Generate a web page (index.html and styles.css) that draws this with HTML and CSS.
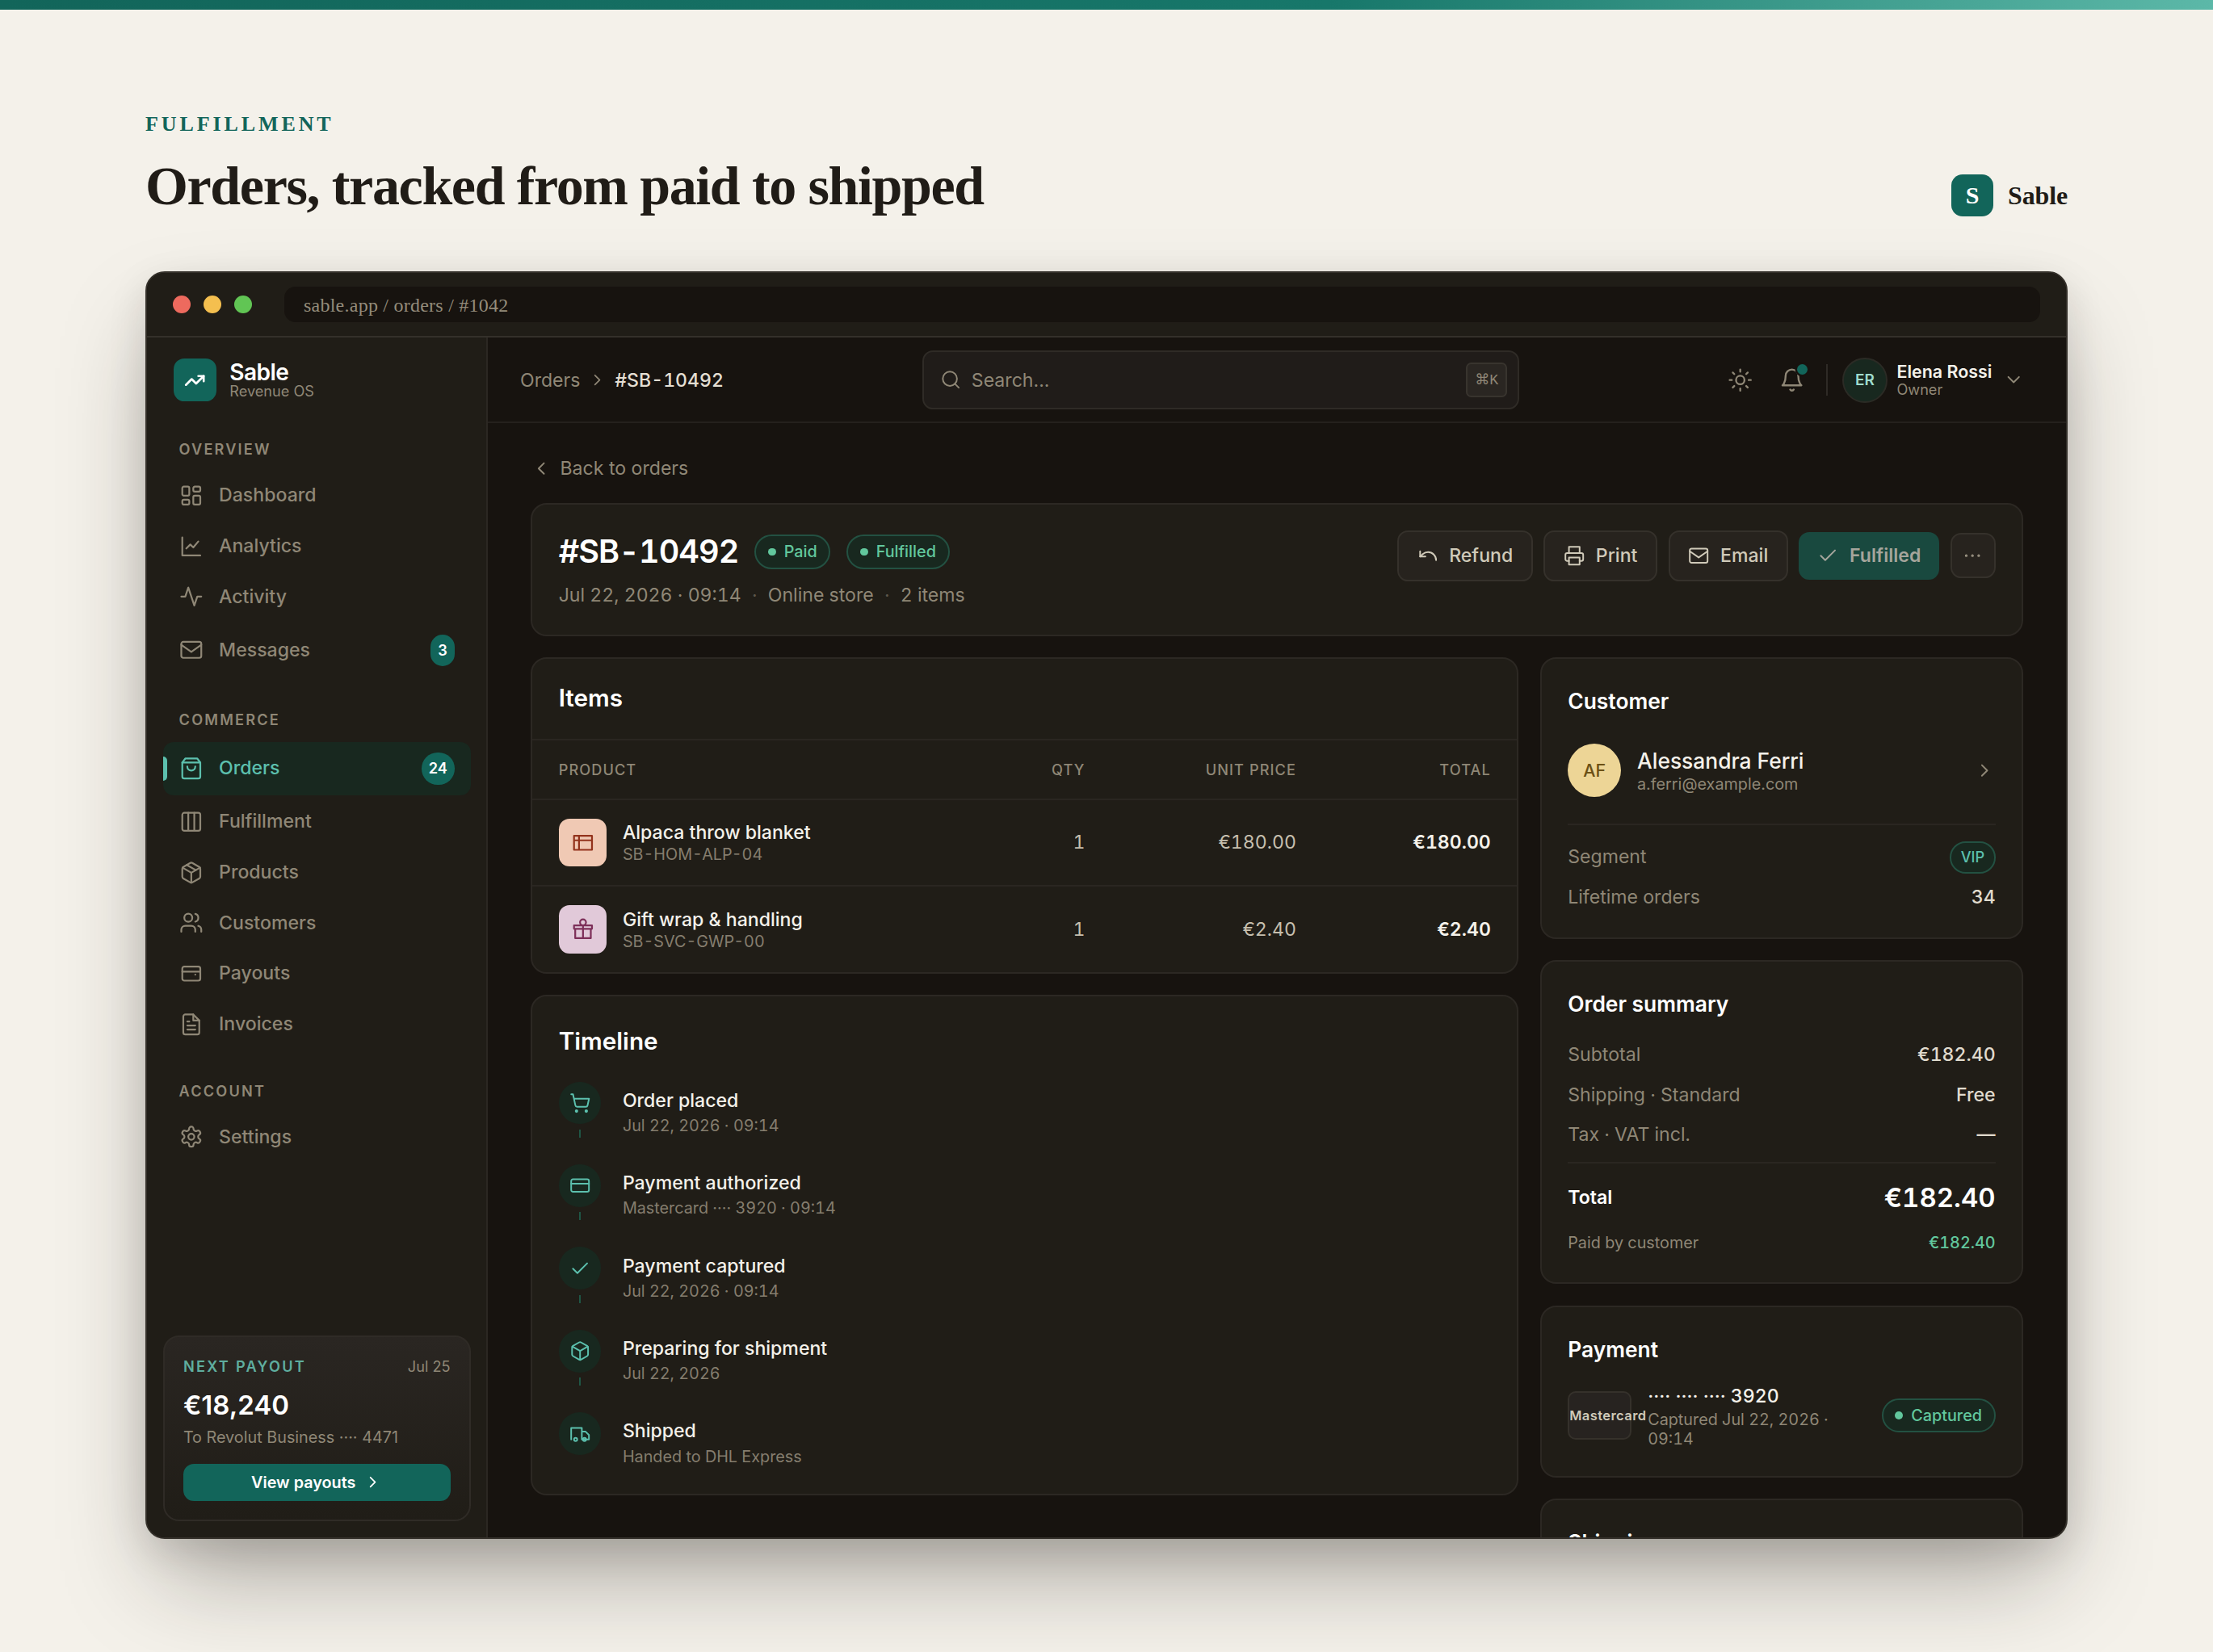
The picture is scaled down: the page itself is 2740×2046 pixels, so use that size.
FILE: index.html
```html
<!DOCTYPE html>
<html lang="en">
<head>
    <meta charset="UTF-8">
    <meta name="viewport" content="width=device-width, initial-scale=1.0">
    <title>Sable - Orders</title>
    <link rel="stylesheet" href="styles.css">
</head>
<body>
    <!-- icon sprite, 24x24 grid -->
    <svg class="sprite" xmlns="http://www.w3.org/2000/svg">
        <symbol id="i-trend" viewBox="0 0 24 24"><path d="M22 7l-8.5 8.5-5-5L2 17"/><path d="M16 7h6v6"/></symbol>
        <symbol id="i-dashboard" viewBox="0 0 24 24"><rect x="3" y="3" width="7" height="9" rx="1.5"/><rect x="14" y="3" width="7" height="5" rx="1.5"/><rect x="14" y="12" width="7" height="9" rx="1.5"/><rect x="3" y="16" width="7" height="5" rx="1.5"/></symbol>
        <symbol id="i-chart" viewBox="0 0 24 24"><path d="M3 3v18h18"/><path d="M7 14l4-4 3 3 5-6"/></symbol>
        <symbol id="i-activity" viewBox="0 0 24 24"><path d="M22 12h-4l-3 9L9 3l-3 9H2"/></symbol>
        <symbol id="i-mail" viewBox="0 0 24 24"><rect x="2" y="4" width="20" height="16" rx="2"/><path d="M22 7l-10 7L2 7"/></symbol>
        <symbol id="i-bag" viewBox="0 0 24 24"><path d="M6 2L3 6v14a2 2 0 0 0 2 2h14a2 2 0 0 0 2-2V6l-3-4z"/><path d="M3 6h18"/><path d="M16 10a4 4 0 0 1-8 0"/></symbol>
        <symbol id="i-columns" viewBox="0 0 24 24"><rect x="3" y="3" width="18" height="18" rx="2"/><path d="M9 3v18M15 3v18"/></symbol>
        <symbol id="i-package" viewBox="0 0 24 24"><path d="M16.5 9.4L7.5 4.2"/><path d="M21 16V8a2 2 0 0 0-1-1.73l-7-4a2 2 0 0 0-2 0l-7 4A2 2 0 0 0 3 8v8a2 2 0 0 0 1 1.73l7 4a2 2 0 0 0 2 0l7-4A2 2 0 0 0 21 16z"/><path d="M3.3 7L12 12l8.7-5M12 22V12"/></symbol>
        <symbol id="i-box" viewBox="0 0 24 24"><path d="M21 16V8a2 2 0 0 0-1-1.73l-7-4a2 2 0 0 0-2 0l-7 4A2 2 0 0 0 3 8v8a2 2 0 0 0 1 1.73l7 4a2 2 0 0 0 2 0l7-4A2 2 0 0 0 21 16z"/><path d="M3.3 7L12 12l8.7-5M12 22V12"/></symbol>
        <symbol id="i-users" viewBox="0 0 24 24"><path d="M16 21v-2a4 4 0 0 0-4-4H6a4 4 0 0 0-4 4v2"/><circle cx="9" cy="7" r="4"/><path d="M22 21v-2a4 4 0 0 0-3-3.87M16 3.13a4 4 0 0 1 0 7.75"/></symbol>
        <symbol id="i-wallet" viewBox="0 0 24 24"><rect x="3" y="5" width="18" height="14" rx="2"/><path d="M3 10h18M16 13h.01"/></symbol>
        <symbol id="i-file" viewBox="0 0 24 24"><path d="M14 2H6a2 2 0 0 0-2 2v16a2 2 0 0 0 2 2h12a2 2 0 0 0 2-2V8z"/><path d="M14 2v6h6M16 13H8M16 17H8M10 9H8"/></symbol>
        <symbol id="i-gear" viewBox="0 0 24 24"><path d="M12.22 2h-.44a2 2 0 0 0-2 2v.18a2 2 0 0 1-1 1.73l-.43.25a2 2 0 0 1-2 0l-.15-.08a2 2 0 0 0-2.73.73l-.22.38a2 2 0 0 0 .73 2.73l.15.1a2 2 0 0 1 1 1.72v.51a2 2 0 0 1-1 1.74l-.15.09a2 2 0 0 0-.73 2.73l.22.38a2 2 0 0 0 2.73.73l.15-.08a2 2 0 0 1 2 0l.43.25a2 2 0 0 1 1 1.73V20a2 2 0 0 0 2 2h.44a2 2 0 0 0 2-2v-.18a2 2 0 0 1 1-1.73l.43-.25a2 2 0 0 1 2 0l.15.08a2 2 0 0 0 2.73-.73l.22-.39a2 2 0 0 0-.73-2.73l-.15-.08a2 2 0 0 1-1-1.74v-.5a2 2 0 0 1 1-1.74l.15-.09a2 2 0 0 0 .73-2.73l-.22-.38a2 2 0 0 0-2.73-.73l-.15.08a2 2 0 0 1-2 0l-.43-.25a2 2 0 0 1-1-1.73V4a2 2 0 0 0-2-2z"/><circle cx="12" cy="12" r="3"/></symbol>
        <symbol id="i-right" viewBox="0 0 24 24"><path d="M9 18l6-6-6-6"/></symbol>
        <symbol id="i-left" viewBox="0 0 24 24"><path d="M15 18l-6-6 6-6"/></symbol>
        <symbol id="i-down" viewBox="0 0 24 24"><path d="M6 9l6 6 6-6"/></symbol>
        <symbol id="i-search" viewBox="0 0 24 24"><circle cx="11" cy="11" r="8"/><path d="M21 21l-4.3-4.3"/></symbol>
        <symbol id="i-sun" viewBox="0 0 24 24"><circle cx="12" cy="12" r="4"/><path d="M12 2v2M12 20v2M4.93 4.93l1.41 1.41M17.66 17.66l1.41 1.41M2 12h2M20 12h2M6.34 17.66l-1.41 1.41M19.07 4.93l-1.41 1.41"/></symbol>
        <symbol id="i-bell" viewBox="0 0 24 24"><path d="M6 8a6 6 0 0 1 12 0c0 7 3 9 3 9H3s3-2 3-9"/><path d="M10.3 21a1.94 1.94 0 0 0 3.4 0"/></symbol>
        <symbol id="i-undo" viewBox="0 0 24 24"><path d="M3 7v6h6"/><path d="M21 17a9 9 0 0 0-9-9 9 9 0 0 0-6 2.3L3 13"/></symbol>
        <symbol id="i-print" viewBox="0 0 24 24"><path d="M6 9V2h12v7"/><path d="M6 18H4a2 2 0 0 1-2-2v-5a2 2 0 0 1 2-2h16a2 2 0 0 1 2 2v5a2 2 0 0 1-2 2h-2"/><rect x="6" y="14" width="12" height="8"/></symbol>
        <symbol id="i-check" viewBox="0 0 24 24"><path d="M20 6L9 17l-5-5"/></symbol>
        <symbol id="i-more" viewBox="0 0 24 24"><circle cx="5" cy="12" r=".6"/><circle cx="12" cy="12" r=".6"/><circle cx="19" cy="12" r=".6"/></symbol>
        <symbol id="i-blanket" viewBox="0 0 24 24"><path d="M3 5h18v14H3zM3 9.5h18M8 5v14"/></symbol>
        <symbol id="i-gift" viewBox="0 0 24 24"><path d="M3 8.2h18v3.4H3zM4.2 11.6V21h15.6v-9.4M12 8.2V21"/><circle cx="12" cy="5.1" r="3"/></symbol>
        <symbol id="i-cart" viewBox="0 0 24 24"><circle cx="8" cy="21" r="1"/><circle cx="19" cy="21" r="1"/><path d="M2.05 2.05h2l2.66 12.42a2 2 0 0 0 2 1.58h9.78a2 2 0 0 0 1.95-1.57l1.65-7.43H5.12"/></symbol>
        <symbol id="i-card" viewBox="0 0 24 24"><rect x="2" y="5" width="20" height="14" rx="2"/><path d="M2 10h20"/></symbol>
        <symbol id="i-truck" viewBox="0 0 24 24"><path d="M2 18V5h12v13M14 9h4l4 4v5h-8"/><circle cx="7" cy="18" r="1.8"/><circle cx="17" cy="18" r="1.8"/></symbol>
    </svg>

    <div class="accent-bar"></div>

    <div class="stage">
        <header class="hero">
            <div>
                <div class="eyebrow">FULFILLMENT</div>
                <h1 class="headline">Orders, tracked from paid to shipped</h1>
            </div>
            <div class="wordmark"><span class="wordmark-box">S</span>Sable</div>
        </header>

        <div class="window">
            <div class="titlebar">
                <span class="light red"></span>
                <span class="light yellow"></span>
                <span class="light green"></span>
                <div class="address">sable.app / orders / #1042</div>
            </div>

            <div class="app">
                <aside class="sidebar">
                    <div class="brand">
                        <span class="brand-logo"><svg class="icon bold s16"><use href="#i-trend"/></svg></span>
                        <div>
                            <div class="brand-name">Sable</div>
                            <div class="brand-sub">Revenue OS</div>
                        </div>
                    </div>

                    <nav class="nav">
                        <div class="nav-group">
                            <div class="nav-label">OVERVIEW</div>
                            <a class="nav-item"><svg class="icon"><use href="#i-dashboard"/></svg>Dashboard</a>
                            <a class="nav-item"><svg class="icon"><use href="#i-chart"/></svg>Analytics</a>
                            <a class="nav-item"><svg class="icon"><use href="#i-activity"/></svg>Activity</a>
                            <a class="nav-item"><svg class="icon"><use href="#i-mail"/></svg>Messages<span class="count">3</span></a>
                        </div>
                        <div class="nav-group">
                            <div class="nav-label">COMMERCE</div>
                            <a class="nav-item active"><svg class="icon"><use href="#i-bag"/></svg>Orders<span class="count">24</span></a>
                            <a class="nav-item"><svg class="icon"><use href="#i-columns"/></svg>Fulfillment</a>
                            <a class="nav-item"><svg class="icon"><use href="#i-package"/></svg>Products</a>
                            <a class="nav-item"><svg class="icon"><use href="#i-users"/></svg>Customers</a>
                            <a class="nav-item"><svg class="icon"><use href="#i-wallet"/></svg>Payouts</a>
                            <a class="nav-item"><svg class="icon"><use href="#i-file"/></svg>Invoices</a>
                        </div>
                        <div class="nav-group">
                            <div class="nav-label">ACCOUNT</div>
                            <a class="nav-item"><svg class="icon"><use href="#i-gear"/></svg>Settings</a>
                        </div>
                    </nav>

                    <div class="payout">
                        <div class="payout-top"><span class="payout-label">NEXT PAYOUT</span><span class="payout-date">Jul 25</span></div>
                        <div class="payout-amount">€18,240</div>
                        <div class="payout-to">To Revolut Business ···· 4471</div>
                        <a class="payout-btn">View payouts<svg class="icon s14"><use href="#i-right"/></svg></a>
                    </div>
                </aside>

                <div class="main">
                    <div class="topbar">
                        <div class="crumbs"><span>Orders</span><svg class="icon s14"><use href="#i-right"/></svg><strong>#SB-10492</strong></div>
                        <div class="search"><svg class="icon s16"><use href="#i-search"/></svg><span>Search...</span><kbd>⌘K</kbd></div>
                        <div class="tools">
                            <svg class="icon s19"><use href="#i-sun"/></svg>
                            <span class="bell"><svg class="icon s19"><use href="#i-bell"/></svg><i></i></span>
                            <span class="divider"></span>
                            <span class="avatar">ER</span>
                            <div class="who">
                                <div class="who-name">Elena Rossi</div>
                                <div class="who-role">Owner</div>
                            </div>
                            <svg class="icon s16"><use href="#i-down"/></svg>
                        </div>
                    </div>

                    <div class="content">
                        <a class="back"><svg class="icon s16"><use href="#i-left"/></svg>Back to orders</a>

                        <section class="card order-head">
                            <div>
                                <div class="order-title">
                                    <h2>#SB-10492</h2>
                                    <span class="badge"><i></i>Paid</span>
                                    <span class="badge"><i></i>Fulfilled</span>
                                </div>
                                <div class="order-meta"><span>Jul 22, 2026 · 09:14</span><em>·</em><span>Online store</span><em>·</em><span>2 items</span></div>
                            </div>
                            <div class="actions">
                                <a class="btn"><svg class="icon s16"><use href="#i-undo"/></svg>Refund</a>
                                <a class="btn"><svg class="icon s16"><use href="#i-print"/></svg>Print</a>
                                <a class="btn"><svg class="icon s16"><use href="#i-mail"/></svg>Email</a>
                                <a class="btn primary"><svg class="icon s16"><use href="#i-check"/></svg>Fulfilled</a>
                                <a class="btn more"><svg class="icon s16"><use href="#i-more"/></svg></a>
                            </div>
                        </section>

                        <div class="columns">
                            <div class="stack">
                                <section class="card">
                                    <h3 class="items-title">Items</h3>
                                    <div class="row thead"><span>PRODUCT</span><span>QTY</span><span>UNIT PRICE</span><span>TOTAL</span></div>
                                    <div class="row">
                                        <div class="product">
                                            <span class="thumb peach"><svg class="icon"><use href="#i-blanket"/></svg></span>
                                            <div>
                                                <div class="product-name">Alpaca throw blanket</div>
                                                <div class="product-sku">SB-HOM-ALP-04</div>
                                            </div>
                                        </div>
                                        <span>1</span><span>€180.00</span><b>€180.00</b>
                                    </div>
                                    <div class="row">
                                        <div class="product">
                                            <span class="thumb pink"><svg class="icon"><use href="#i-gift"/></svg></span>
                                            <div>
                                                <div class="product-name">Gift wrap &amp; handling</div>
                                                <div class="product-sku">SB-SVC-GWP-00</div>
                                            </div>
                                        </div>
                                        <span>1</span><span>€2.40</span><b>€2.40</b>
                                    </div>
                                </section>

                                <section class="card padded">
                                    <h3 class="timeline-title">Timeline</h3>
                                    <ol class="timeline">
                                        <li>
                                            <div class="rail"><span class="node"><svg class="icon s16"><use href="#i-cart"/></svg></span></div>
                                            <div class="event"><div class="event-name">Order placed</div><div class="event-sub">Jul 22, 2026 · 09:14</div></div>
                                        </li>
                                        <li>
                                            <div class="rail"><span class="node"><svg class="icon s16"><use href="#i-card"/></svg></span></div>
                                            <div class="event"><div class="event-name">Payment authorized</div><div class="event-sub">Mastercard ···· 3920 · 09:14</div></div>
                                        </li>
                                        <li>
                                            <div class="rail"><span class="node"><svg class="icon s16"><use href="#i-check"/></svg></span></div>
                                            <div class="event"><div class="event-name">Payment captured</div><div class="event-sub">Jul 22, 2026 · 09:14</div></div>
                                        </li>
                                        <li>
                                            <div class="rail"><span class="node"><svg class="icon s16"><use href="#i-box"/></svg></span></div>
                                            <div class="event"><div class="event-name">Preparing for shipment</div><div class="event-sub">Jul 22, 2026</div></div>
                                        </li>
                                        <li>
                                            <div class="rail"><span class="node"><svg class="icon s16"><use href="#i-truck"/></svg></span></div>
                                            <div class="event"><div class="event-name">Shipped</div><div class="event-sub">Handed to DHL Express</div></div>
                                        </li>
                                    </ol>
                                </section>
                            </div>

                            <div class="stack">
                                <section class="card padded">
                                    <h4>Customer</h4>
                                    <a class="customer">
                                        <span class="customer-avatar">AF</span>
                                        <div>
                                            <div class="customer-name">Alessandra Ferri</div>
                                            <div class="customer-mail">a.ferri@example.com</div>
                                        </div>
                                        <svg class="icon s16"><use href="#i-right"/></svg>
                                    </a>
                                    <div class="facts">
                                        <div class="fact"><span>Segment</span><span class="vip">VIP</span></div>
                                        <div class="fact"><span>Lifetime orders</span><b>34</b></div>
                                    </div>
                                </section>

                                <section class="card padded">
                                    <h4>Order summary</h4>
                                    <div class="sums">
                                        <div class="fact"><span>Subtotal</span><b>€182.40</b></div>
                                        <div class="fact"><span>Shipping · Standard</span><b>Free</b></div>
                                        <div class="fact"><span>Tax · VAT incl.</span><b>—</b></div>
                                        <div class="fact total"><span>Total</span><b>€182.40</b></div>
                                        <div class="fact paid"><span>Paid by customer</span><b>€182.40</b></div>
                                    </div>
                                </section>

                                <section class="card padded">
                                    <h4>Payment</h4>
                                    <div class="payment">
                                        <span class="network">Mastercard</span>
                                        <div class="payment-text">
                                            <div class="payment-no">···· ···· ···· 3920</div>
                                            <div class="payment-sub">Captured Jul 22, 2026 · 09:14</div>
                                        </div>
                                        <span class="badge"><i></i>Captured</span>
                                    </div>
                                </section>

                                <section class="card padded">
                                    <h4>Shipping</h4>
                                </section>
                            </div>
                        </div>
                    </div>
                </div>
            </div>
        </div>
    </div>
</body>
</html>
```
FILE: styles.css
```css
/* 0.1rem = one app pixel */
html {
    font-size: 16.5px;
}
* {
    box-sizing: border-box;
    margin: 0;
    padding: 0;
}
body {
    width: 2740px;
    height: 2046px;
    overflow: hidden;
    background: #f4f1ea;
    font-family: "Liberation Serif", "Times New Roman", serif;
}
i, em {
    font-style: normal;
}
.sprite {
    position: absolute;
    width: 0;
    height: 0;
}
.icon {
    flex: none;
    display: block;
    width: 1.8rem;
    height: 1.8rem;
    fill: none;
    stroke: currentColor;
    stroke-width: 1.8;
    stroke-linecap: round;
    stroke-linejoin: round;
    overflow: visible;
}
.icon.s19 {
    width: 1.9rem;
    height: 1.9rem;
}
.icon.s16 {
    width: 1.6rem;
    height: 1.6rem;
}
.icon.s14 {
    width: 1.4rem;
    height: 1.4rem;
}
.icon.bold {
    stroke-width: 2.4;
}

/* page header */
.accent-bar {
    height: 12px;
    background: linear-gradient(90deg, #12655a 0%, #17776a 60%, #5cb8a8 100%);
}
.stage {
    padding: 0 180px;
}
.hero {
    display: flex;
    justify-content: space-between;
    align-items: flex-end;
    height: 324px;
    padding-bottom: 68px;
}
.eyebrow {
    font-size: 26px;
    line-height: 30px;
    font-weight: 700;
    letter-spacing: 0.15em;
    color: #12655a;
}
.headline {
    margin-top: 24px;
    font-size: 68px;
    line-height: 75px;
    font-weight: 700;
    letter-spacing: -0.02em;
    color: #201c17;
}
.wordmark {
    display: flex;
    align-items: center;
    gap: 18px;
    font-size: 32px;
    font-weight: 700;
    letter-spacing: -0.005em;
    color: #201c17;
}
.wordmark-box {
    display: grid;
    place-items: center;
    width: 52px;
    height: 52px;
    border-radius: 14px;
    background: #12655a;
    color: #fff;
    font-size: 30px;
}

/* window */
.window {
    height: 1570px;
    border: 2px solid #34302a;
    border-radius: 24px;
    overflow: hidden;
    background: #17130f;
    box-shadow: 0 60px 120px -20px rgba(32, 28, 23, 0.36), 0 16px 48px rgba(32, 28, 23, 0.12);
}
.titlebar {
    display: flex;
    align-items: center;
    gap: 16px;
    height: 80px;
    padding: 0 32px;
    background: #201d17;
    border-bottom: 2px solid #34302a;
}
.light {
    width: 22px;
    height: 22px;
    border-radius: 50%;
}
.red { background: #ed6a5e; }
.yellow { background: #f4bf4f; }
.green { background: #61c554; }
.address {
    flex: 1;
    height: 44px;
    margin-left: 24px;
    padding-left: 24px;
    border-radius: 14px;
    background: #17130f;
    color: #948c7b;
    font-size: 24px;
    line-height: 46px;
    letter-spacing: 0.01em;
}
.app {
    display: flex;
    height: 1486px;
    font-family: Inter, sans-serif;
    font-size: 1.4rem;
    color: #8f8776;
}

/* sidebar */
.sidebar {
    display: flex;
    flex-direction: column;
    flex: none;
    width: 25.6rem;
    padding: 0 1.2rem 1.2rem;
    background: #201d17;
    border-right: 2px solid #2b2722;
}
.brand {
    display: flex;
    align-items: center;
    gap: 1rem;
    height: 6.4rem;
    padding-left: 0.8rem;
}
.brand-logo {
    display: grid;
    place-items: center;
    width: 3.2rem;
    height: 3.2rem;
    border-radius: 0.8rem;
    background: #12655a;
    color: #fff;
}
.brand-name {
    font-size: 1.7rem;
    line-height: 1.7rem;
    font-weight: 600;
    letter-spacing: -0.02em;
    color: #fff;
}
.brand-sub {
    font-size: 1.1rem;
    line-height: 1.2rem;
}
.nav {
    display: flex;
    flex-direction: column;
    gap: 2.4rem;
    padding-top: 1.2rem;
}
.nav-group {
    display: flex;
    flex-direction: column;
    gap: 0.2rem;
}
.nav-label {
    padding-left: 1.2rem;
    margin-bottom: 0.65rem;
    font-size: 1.1rem;
    line-height: 1.63rem;
    font-weight: 600;
    letter-spacing: 0.12em;
}
.nav-item {
    display: flex;
    align-items: center;
    gap: 1.2rem;
    padding: 0.8rem 1.2rem;
    border-radius: 0.8rem;
    line-height: 2rem;
    font-weight: 500;
}
.nav-item.active {
    position: relative;
    background: #18281f;
    color: #5cc0ae;
}
.nav-item.active::before {
    content: "";
    position: absolute;
    left: 0;
    top: 1.1rem;
    width: 0.3rem;
    height: 1.8rem;
    border-radius: 0 0.3rem 0.3rem 0;
    background: #5cc0ae;
}
.count {
    margin-left: auto;
    padding: 0 0.55rem;
    border-radius: 1.2rem;
    background: #12655a;
    color: #fff;
    font-size: 1.1rem;
    line-height: 2.4rem;
    font-weight: 600;
}
.payout {
    margin-top: auto;
    height: 13.95rem;
    padding: 1.4rem;
    border: 2px solid #2f2b26;
    border-radius: 1.2rem;
    background: linear-gradient(180deg, #2a2622, #201d17);
}
.payout-top {
    display: flex;
    justify-content: space-between;
    font-size: 1.1rem;
    line-height: 1.65rem;
}
.payout-label {
    font-weight: 600;
    letter-spacing: 0.125em;
    color: #5fae9f;
}
.payout-amount {
    margin-top: 0.65rem;
    font-size: 2rem;
    line-height: 2.8rem;
    font-weight: 600;
    color: #fff;
}
.payout-to {
    margin-top: 0.15rem;
    font-size: 1.2rem;
    line-height: 1.8rem;
}
.payout-btn {
    display: flex;
    align-items: center;
    justify-content: center;
    gap: 0.6rem;
    height: 2.8rem;
    margin-top: 1.05rem;
    border-radius: 0.8rem;
    background: #12655a;
    color: #fff;
    font-size: 1.2rem;
    font-weight: 600;
}

/* top bar */
.main {
    flex: 1;
    min-width: 0;
}
.topbar {
    display: flex;
    align-items: center;
    height: 6.4rem;
    padding: 0.1rem 2.4rem 0;
    border-bottom: 2px solid #25211d;
}
.crumbs {
    display: flex;
    align-items: center;
    gap: 0.6rem;
    width: 30.2rem;
    font-variant-numeric: tabular-nums;
}
.crumbs strong {
    font-weight: 500;
    color: #e4dfd3;
}
.search {
    display: flex;
    align-items: center;
    gap: 0.75rem;
    width: 44.8rem;
    height: 4.4rem;
    padding: 0 0.8rem 0 1.2rem;
    border: 2px solid #2f2b26;
    border-radius: 0.8rem;
    background: #201c19;
}
.search kbd {
    margin-left: auto;
    width: 3.1rem;
    height: 2.6rem;
    border: 2px solid #38342e;
    border-radius: 0.4rem;
    background: #2a2622;
    font: 1.1rem/2.5rem "Liberation Mono", "DejaVu Sans", monospace;
    text-align: center;
}
.tools {
    display: flex;
    align-items: center;
    margin-left: auto;
    padding-right: 0.75rem;
}
.bell {
    position: relative;
    margin: 0 1.6rem 0 2rem;
}
.bell i {
    position: absolute;
    top: -0.25rem;
    right: -0.25rem;
    width: 0.8rem;
    height: 0.8rem;
    border-radius: 50%;
    background: #12655a;
    box-shadow: 0 0 0 0.15rem #17130f;
}
.divider {
    width: 2px;
    height: 2.4rem;
    background: #2f2b26;
}
.avatar {
    width: 3.4rem;
    height: 3.4rem;
    margin: 0 0.7rem 0 1.1rem;
    border: 2px solid #2b2b25;
    border-radius: 50%;
    background: #18281f;
    color: #9fdccd;
    font-size: 1.15rem;
    line-height: 3.1rem;
    font-weight: 600;
    text-align: center;
}
.who {
    margin-right: 0.8rem;
}
.who-name {
    font-size: 1.3rem;
    line-height: 1.5rem;
    font-weight: 600;
    color: #f4f1ea;
}
.who-role {
    font-size: 1.1rem;
    line-height: 1.2rem;
}

/* order page */
.content {
    padding: 2.45rem 3.2rem 0;
}
.back {
    display: flex;
    align-items: center;
    gap: 0.6rem;
    height: 2rem;
    margin-bottom: 1.55rem;
    line-height: 2rem;
}
.card {
    border: 2px solid #2c2823;
    border-radius: 1.2rem;
    background: #201d17;
}
.padded {
    padding: 1.99rem 1.97rem;
}
.order-head {
    display: flex;
    justify-content: space-between;
    align-items: flex-start;
    height: 10rem;
    padding: 1.97rem;
    margin-bottom: 1.6rem;
}
.order-title {
    display: flex;
    align-items: center;
    gap: 1.2rem;
    height: 3.2rem;
    font-variant-numeric: tabular-nums;
}
.order-title h2 {
    font-size: 2.4rem;
    font-weight: 600;
    letter-spacing: -0.023em;
    color: #fff;
}
.badge {
    display: flex;
    align-items: center;
    gap: 0.6rem;
    height: 2.6rem;
    padding: 0 0.89rem;
    border: 2px solid #235142;
    border-radius: 1.3rem;
    background: #18281f;
    color: #62c79d;
    font-size: 1.2rem;
    font-weight: 500;
}
.badge i {
    width: 0.6rem;
    height: 0.6rem;
    border-radius: 50%;
    background: #62c79d;
}
.order-meta {
    display: flex;
    gap: 0.8rem;
    margin-top: 0.65rem;
    line-height: 2rem;
    font-variant-numeric: tabular-nums;
}
.order-meta em {
    color: #5d574c;
}
.actions {
    display: flex;
    align-items: center;
    gap: 0.8rem;
}
.btn {
    display: flex;
    align-items: center;
    gap: 0.8rem;
    height: 3.8rem;
    padding: 0 1.39rem;
    border: 2px solid #35312b;
    border-radius: 0.8rem;
    background: #27231e;
    color: #d0cab9;
    font-weight: 500;
}
.btn.primary {
    height: 3.6rem;
    padding: 0 1.4rem;
    border: 0;
    background: #19493f;
    color: #a5a59c;
    font-weight: 600;
}
.btn.more {
    justify-content: center;
    width: 3.4rem;
    height: 3.4rem;
    padding: 0;
    color: #a09887;
}
.columns {
    display: grid;
    grid-template-columns: 74.13rem 36.27rem;
    gap: 1.6rem;
    align-items: start;
}
.stack {
    display: flex;
    flex-direction: column;
    gap: 1.6rem;
}

/* items */
.items-title, .timeline-title {
    font-size: 1.8rem;
    line-height: 2.7rem;
    font-weight: 600;
    color: #fff;
}
.items-title {
    height: 6.1rem;
    padding: 1.6rem 1.97rem;
    border-bottom: 2px solid #2a2621;
}
.row {
    display: grid;
    grid-template-columns: 1fr 12rem 15.85rem 14.6rem;
    align-items: center;
    height: 6.5rem;
    padding: 0 1.97rem;
    border-bottom: 2px solid #2a2621;
    text-align: right;
    color: #c6bfae;
    font-variant-numeric: tabular-nums;
}
.row:last-child {
    height: 6.4rem;
    border-bottom: 0;
}
.row b {
    font-weight: 600;
    color: #f4f1ea;
}
.thead {
    height: 4.5rem;
    font-size: 1.1rem;
    font-weight: 500;
    letter-spacing: 0.06em;
    color: #8f8776;
}
.thead span:first-child {
    text-align: left;
}
.product {
    display: flex;
    align-items: center;
    gap: 1.2rem;
    text-align: left;
}
.thumb {
    display: grid;
    place-items: center;
    width: 3.6rem;
    height: 3.6rem;
    border-radius: 0.8rem;
}
.peach {
    background: #f0c9b4;
    color: #93331c;
}
.pink {
    background: #e1c9d9;
    color: #7d2f59;
}
.product-name {
    margin-top: 0.08rem;
    line-height: 1.75rem;
    font-weight: 500;
    color: #f4f1ea;
}
.product-sku {
    font-size: 1.2rem;
    line-height: 1.5rem;
    color: #857d6e;
}

/* timeline */
.timeline {
    margin-top: 1.7rem;
    list-style: none;
}
.timeline li {
    display: flex;
    gap: 1.6rem;
    height: 6.21rem;
}
.timeline li:last-child {
    height: 4.13rem;
}
.rail {
    display: flex;
    flex-direction: column;
    align-items: center;
    gap: 0.4rem;
}
.timeline li:not(:last-child) .rail::after {
    content: "";
    width: 2px;
    height: 0.6rem;
    background: #1f5645;
}
.node {
    display: grid;
    place-items: center;
    width: 3.2rem;
    height: 3.2rem;
    border-radius: 50%;
    background: #18281f;
    color: #5cc0ae;
}
.event {
    padding-top: 0.43rem;
}
.event-name {
    line-height: 2rem;
    font-weight: 500;
    color: #f4f1ea;
}
.event-sub {
    margin-top: 0.07rem;
    font-size: 1.2rem;
    line-height: 1.6rem;
    color: #857d6e;
    font-variant-numeric: tabular-nums;
}

/* right column */
h4 {
    font-size: 1.6rem;
    line-height: 2.4rem;
    font-weight: 600;
    color: #fff;
}
.customer {
    display: flex;
    align-items: center;
    gap: 1.2rem;
    padding: 2rem 0;
    border-bottom: 2px solid #2a2621;
}
.customer .icon {
    margin-left: auto;
}
.customer-avatar {
    width: 4rem;
    height: 4rem;
    border-radius: 50%;
    background: #edd596;
    color: #6b5015;
    font-size: 1.3rem;
    line-height: 4rem;
    font-weight: 500;
    text-align: center;
}
.customer-name {
    margin-top: 0.1rem;
    font-size: 1.6rem;
    line-height: 2rem;
    font-weight: 500;
    color: #f4f1ea;
}
.customer-mail {
    font-size: 1.2rem;
    line-height: 1.5rem;
}
.facts {
    display: flex;
    flex-direction: column;
    gap: 0.8rem;
    padding-top: 1.2rem;
}
.fact {
    display: flex;
    justify-content: space-between;
    align-items: center;
    line-height: 2rem;
    font-variant-numeric: tabular-nums;
}
.fact b {
    font-weight: 500;
    color: #e0dbce;
}
.vip {
    height: 2.4rem;
    padding: 0 0.7rem;
    border: 2px solid #235142;
    border-radius: 1.2rem;
    background: #18281f;
    color: #5cc0ae;
    font-size: 1.1rem;
    line-height: 2.15rem;
    font-weight: 500;
}
.sums {
    display: flex;
    flex-direction: column;
    gap: 1rem;
    margin-top: 1.6rem;
}
.fact.total {
    padding-top: 1.17rem;
    border-top: 2px solid #2a2621;
    line-height: 2.8rem;
    font-weight: 600;
    color: #fff;
}
.fact.total b {
    font-size: 2rem;
    font-weight: 600;
    color: #fff;
}
.fact.paid {
    font-size: 1.2rem;
}
.fact.paid b {
    color: #62c79d;
}
.payment {
    display: flex;
    align-items: center;
    gap: 1.2rem;
    margin-top: 1.6rem;
    font-variant-numeric: tabular-nums;
}
.payment .network, .payment .badge {
    margin-bottom: 0.4rem;
}
.network {
    display: grid;
    place-items: center;
    flex: none;
    width: 4.8rem;
    height: 3.6rem;
    border: 2px solid #35312b;
    border-radius: 0.6rem;
    background: #272320;
    color: #d0cab9;
    font-size: 1rem;
    font-weight: 600;
    letter-spacing: 0.025em;
}
.payment-text {
    flex: 1;
}
.payment-no {
    line-height: 1.4rem;
    font-weight: 500;
    color: #f4f1ea;
}
.payment-sub {
    margin-top: 0.3rem;
    font-size: 1.2rem;
    line-height: 1.5rem;
}
```
